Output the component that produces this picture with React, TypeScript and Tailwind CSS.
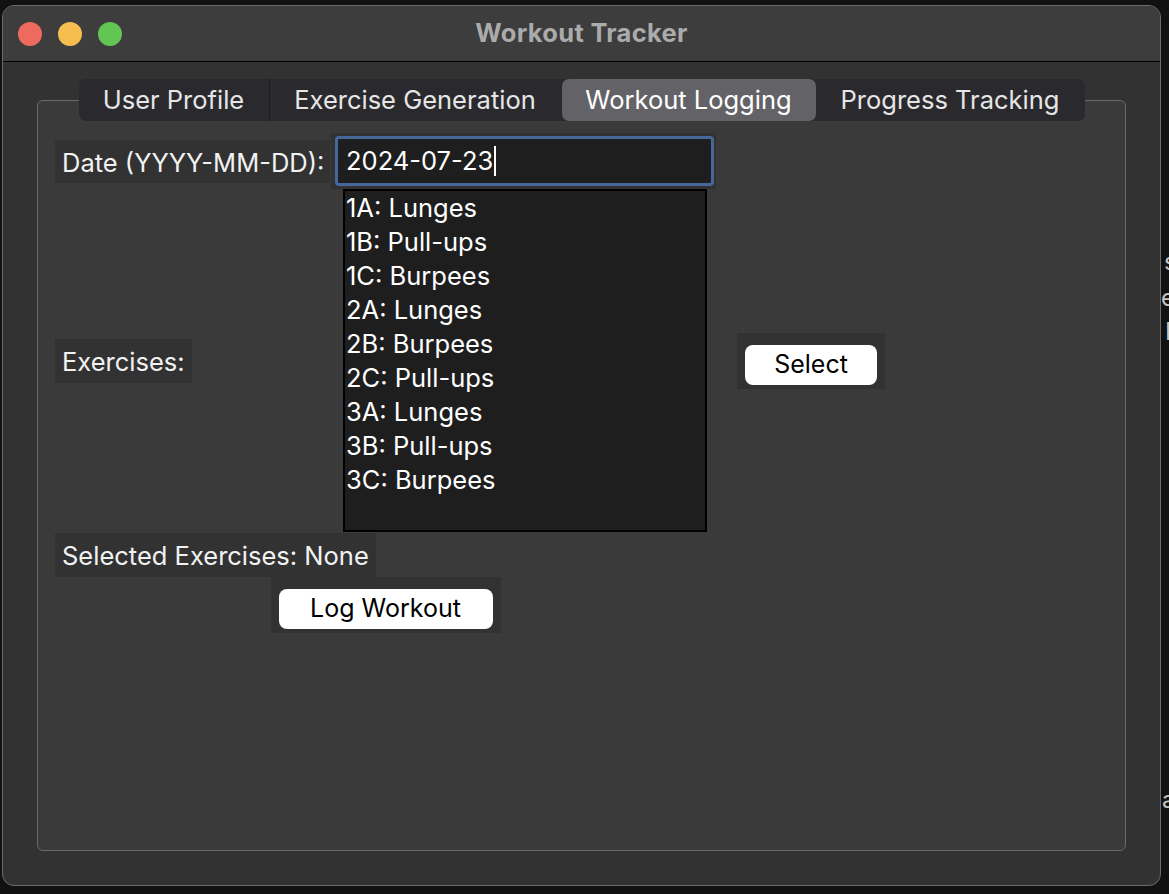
import React from "react";

const font = { fontFamily: 'Inter, "Open Sans", "Liberation Sans", sans-serif' };

const exercises = [
  "1A: Lunges",
  "1B: Pull-ups",
  "1C: Burpees",
  "2A: Lunges",
  "2B: Burpees",
  "2C: Pull-ups",
  "3A: Lunges",
  "3B: Pull-ups",
  "3C: Burpees",
];

const tabs = ["User Profile", "Exercise Generation", "Workout Logging", "Progress Tracking"];
const tabWidths = ["w-[191px]", "w-[292px]", "w-[254px]", "w-[269px]"];

export default function App() {
  return (
    <div className="relative w-[1169px] h-[894px] bg-[#111111] overflow-hidden" style={font}>
      {/* desktop fragments behind the window */}
      <div className="absolute left-[1164px] top-[250px] text-[#c4c4c4] text-[24px] leading-none">s</div>
      <div className="absolute left-[1161px] top-[286px] text-[#c4c4c4] text-[24px] leading-none">e</div>
      <div className="absolute left-[1165px] top-[320px] text-[#c4c4c4] text-[24px] leading-none">I</div>
      <div className="absolute left-[1162px] top-[788px] text-[#c4c4c4] text-[24px] leading-none">a</div>

      <div className="absolute left-[2px] top-[5px] w-[1159px] h-[881px] rounded-[12px] border border-[#6b6b6b] bg-[#323232] flex flex-col overflow-hidden">
        {/* title bar */}
        <div className="h-[56px] bg-[#3d3d3d] border-b border-black flex items-center relative shrink-0">
          <div className="flex gap-[16px] pl-[15px]">
            <div className="w-[24px] h-[24px] rounded-full bg-[#ee6a5f]" />
            <div className="w-[24px] h-[24px] rounded-full bg-[#f5be4f]" />
            <div className="w-[24px] h-[24px] rounded-full bg-[#62c554]" />
          </div>
          <div className="absolute inset-0 flex items-center justify-center text-[#ababab] font-bold text-[25.5px] tracking-[0.3px]">
            Workout Tracker
          </div>
        </div>

        {/* body */}
        <div className="flex-1 flex flex-col px-[34px] pt-[17px] pb-[34px]">
          <div className="self-center z-10 flex h-[42px] rounded-[7px] bg-[#2a2a2e] text-[#e6e6e6] text-[25.5px]">
            {tabs.map((t, i) => (
              <div
                key={t}
                className={
                  "flex items-center justify-center h-full " +
                  tabWidths[i] +
                  (i === 2
                    ? " bg-[#636367] rounded-[7px] text-white"
                    : i === 0
                    ? " border-r border-[#1c1c1f]"
                    : i === 1
                    ? " border-r border-[#2a2a2e]"
                    : "")
                }
              >
                {t}
              </div>
            ))}
          </div>
          <div className="-mt-[21px] flex-1 rounded-[6px] border border-[#6a6a6a] bg-[#3a3a3a] pl-[17px] pt-[32px]">
            <div className="grid grid-cols-[276px_385px_auto] text-[25.5px] text-[#f2f2f2]">
              {/* row 1 */}
              <div className="h-[56px] flex items-center">
                <div className="h-[43px] w-[275px] bg-[#323232] flex items-center pl-[7px] pt-[4px]">Date (YYYY-MM-DD):</div>
              </div>
              <div className="h-[56px] bg-[#323232] flex items-center pl-[4px]">
                <div className="w-[379px] h-[50px] rounded-[4px] border-[3px] border-[#46679a] bg-[#1e1e1e] flex items-center pl-[8px] text-white text-[25.5px]">
                  2024-07-23<span className="inline-block w-[2px] h-[30px] bg-white ml-[1px]" />
                </div>
              </div>
              <div />

              {/* row 2 */}
              <div className="flex items-center">
                <div className="h-[44px] bg-[#323232] flex items-center px-[7px] pt-[3px]">Exercises:</div>
              </div>
              <div className="pl-[12px]">
                <div className="w-[364px] h-[343px] bg-[#1e1e1e] border-2 border-black text-white text-[25.5px]">
                  {exercises.map((e) => (
                    <div key={e} className="h-[34px] flex items-center pl-[1px]">
                      {e}
                    </div>
                  ))}
                </div>
              </div>
              <div className="flex items-center pl-[21px]">
                <div className="w-[148px] h-[56px] bg-[#323232] flex justify-center pt-[12px]">
                  <div className="w-[132px] h-[40px] bg-white rounded-[8px] flex items-center justify-center text-black text-[25px]">
                    Select
                  </div>
                </div>
              </div>

              {/* row 3 */}
              <div className="col-span-2 pt-[1px]">
                <div className="inline-flex h-[44px] bg-[#323232] items-center px-[7px] pt-[3px]">Selected Exercises: None</div>
              </div>
              <div />

              {/* row 4 */}
              <div className="col-span-2 flex justify-center">
                <div className="w-[230px] h-[56px] bg-[#323232] flex justify-center pt-[12px]">
                  <div className="w-[214px] h-[40px] bg-white rounded-[8px] flex items-center justify-center text-black text-[25px]">
                    Log Workout
                  </div>
                </div>
              </div>
              <div />
            </div>
          </div>
        </div>
      </div>
    </div>
  );
}
